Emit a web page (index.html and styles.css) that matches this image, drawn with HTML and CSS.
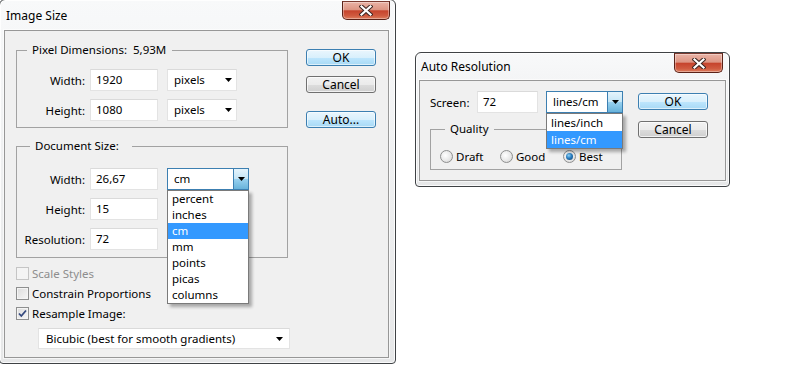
FILE: index.html
```html
<!DOCTYPE html>
<html>
<head>
<meta charset="utf-8">
<title>Image Size</title>
<link rel="stylesheet" href="styles.css">
</head>
<body>
<div class="stage">
  <div class="win win-main">
    <div class="titlebar">
      <span class="title">Image Size</span>
      <div class="close"><svg width="14" height="11" viewBox="0 0 14 11"><path d="M2.5 1.5 L11.5 9.5 M11.5 1.5 L2.5 9.5" stroke="#3b2420" stroke-width="4.2" stroke-linecap="square"/><path d="M2.5 1.5 L11.5 9.5 M11.5 1.5 L2.5 9.5" stroke="#ffffff" stroke-width="2.2" stroke-linecap="square"/></svg></div>
    </div>
    <div class="client client-main">
      <div class="main-col">
        <fieldset class="group group-pixel">
          <legend class="legend-pixel">Pixel Dimensions:&nbsp;&nbsp;5,93M</legend>
          <div class="group-body body-pixel">
            <div class="row">
              <span class="lbl">Width:</span>
              <div class="field">1920</div>
              <div class="combo combo-pixels"><span>pixels</span><svg class="tri" width="7" height="4" viewBox="0 0 7 4"><polygon points="0,0 7,0 3.5,4" fill="#000"/></svg></div>
            </div>
            <div class="row">
              <span class="lbl">Height:</span>
              <div class="field">1080</div>
              <div class="combo combo-pixels"><span>pixels</span><svg class="tri" width="7" height="4" viewBox="0 0 7 4"><polygon points="0,0 7,0 3.5,4" fill="#000"/></svg></div>
            </div>
          </div>
        </fieldset>
        <fieldset class="group group-doc">
          <legend class="legend-doc">Document Size:</legend>
          <div class="group-body body-doc">
            <div class="row">
              <span class="lbl">Width:</span>
              <div class="field">26,67</div>
              <div class="combo combo-open combo-cm"><span>cm</span><div class="drop-btn"><svg width="7" height="4" viewBox="0 0 7 4"><polygon points="0,0 7,0 3.5,4" fill="#000"/></svg></div>
                <ul class="list list-units">
                  <li>percent</li>
                  <li>inches</li>
                  <li class="sel">cm</li>
                  <li>mm</li>
                  <li>points</li>
                  <li>picas</li>
                  <li>columns</li>
                </ul>
              </div>
            </div>
            <div class="row">
              <span class="lbl">Height:</span>
              <div class="field">15</div>
            </div>
            <div class="row">
              <span class="lbl">Resolution:</span>
              <div class="field">72</div>
            </div>
          </div>
        </fieldset>
        <div class="checks">
          <div class="check disabled"><span class="box"></span><span>Scale Styles</span></div>
          <div class="check"><span class="box"></span><span>Constrain Proportions</span></div>
          <div class="check"><span class="box"><svg width="11" height="11" viewBox="0 0 11 11"><path d="M2 5.5 L4.3 8 L9 2.5" fill="none" stroke="#34497e" stroke-width="1.8"/></svg></span><span>Resample Image:</span></div>
        </div>
        <div class="combo combo-bicubic"><span>Bicubic (best for smooth gradients)</span><svg class="tri" width="7" height="4" viewBox="0 0 7 4"><polygon points="0,0 7,0 3.5,4" fill="#000"/></svg></div>
      </div>
      <div class="btn-col btn-col-main">
        <div class="btn btn-default">OK</div>
        <div class="btn btn-cancel">Cancel</div>
        <div class="btn btn-default btn-auto">Auto...</div>
      </div>
    </div>
  </div>

  <div class="win win-auto">
    <div class="titlebar titlebar-auto">
      <span class="title">Auto Resolution</span>
      <div class="close close-auto"><svg width="14" height="11" viewBox="0 0 14 11"><path d="M2.5 1.5 L11.5 9.5 M11.5 1.5 L2.5 9.5" stroke="#3b2420" stroke-width="4.2" stroke-linecap="square"/><path d="M2.5 1.5 L11.5 9.5 M11.5 1.5 L2.5 9.5" stroke="#ffffff" stroke-width="2.2" stroke-linecap="square"/></svg></div>
    </div>
    <div class="client client-auto">
      <div class="auto-col">
        <div class="row">
          <span class="lbl-screen">Screen:</span>
          <div class="field field-screen">72</div>
          <div class="combo combo-open combo-lines"><span>lines/cm</span><div class="drop-btn"><svg width="7" height="4" viewBox="0 0 7 4"><polygon points="0,0 7,0 3.5,4" fill="#000"/></svg></div>
            <ul class="list list-lines">
              <li>lines/inch</li>
              <li class="sel">lines/cm</li>
            </ul>
          </div>
        </div>
        <fieldset class="group group-quality">
          <legend class="legend-quality">Quality</legend>
          <div class="group-body body-quality">
            <div class="radio r-draft"><span class="dot"></span><span>Draft</span></div>
            <div class="radio r-good"><span class="dot"></span><span>Good</span></div>
            <div class="radio r-best"><span class="dot on"></span><span>Best</span></div>
          </div>
        </fieldset>
      </div>
      <div class="btn-col btn-col-auto">
        <div class="btn btn-default">OK</div>
        <div class="btn btn-cancel btn-cancel-auto">Cancel</div>
      </div>
    </div>
  </div>
</div>
</body>
</html>
```

FILE: styles.css
```css
* { box-sizing: border-box; }
html, body { margin: 0; padding: 0; background: #ffffff; }
body {
  width: 806px;
  height: 391px;
  overflow: hidden;
  font-family: "Noto Sans", "Open Sans", sans-serif;
  font-size: 11.5px;
  color: #000;
}
.stage { display: flex; align-items: flex-start; }

/* window frame */
.win {
  display: flex;
  flex-direction: column;
  border: 1px solid #3f4245;
  border-radius: 6px 6px 4px 4px;
  background: linear-gradient(180deg, #f8f9fa 0%, #f0f1f2 40%, #e6e7e8 100%);
  box-shadow: inset 0 0 0 1px rgba(255,255,255,0.8);
}
.win-main { width: 397px; height: 365px; margin: -1px 0 0 -1px; }
.win-auto { width: 315px; height: 135px; margin: 52px 0 0 19px; }

.titlebar {
  display: flex;
  justify-content: space-between;
  align-items: flex-start;
  height: 30px;
  padding: 0 5px 0 6px;
}
.titlebar-auto { height: 27px; padding: 0 6px 0 5px; }
.title { font-size: 12px; line-height: 16px; margin-top: 8px; color: #000; }
.titlebar-auto .title { margin-top: 6px; }

.close {
  width: 48px;
  height: 19px;
  margin-top: 1px;
  border: 1px solid #5a2218;
  border-top-color: #7a3a30;
  border-radius: 0 0 5px 5px;
  background: linear-gradient(180deg, #eab3a6 0%, #dd9583 45%, #c6442d 52%, #cf5a3f 80%, #dd7d5e 100%);
  box-shadow: inset 0 0 0 1px rgba(255,255,255,0.35);
  display: flex;
  align-items: center;
  justify-content: center;
}
.close-auto { width: 49px; height: 20px; margin-top: 0; }

/* client area */
.client {
  display: flex;
  background: #f0f0f0;
  border: 1px solid #979797;
  box-shadow: 0 0 0 1px rgba(255,255,255,0.6);
}
.client-main { margin: 0 6px 5px 4px; height: 328px; }
.client-auto { margin: 0 3px 5px 3px; height: 101px; }

.main-col { width: 283px; padding: 11px 0 0 11px; }

/* group boxes */
.group {
  margin: 0;
  padding: 0;
  border: 1px solid #a2a2a2;
  min-width: 0;
}
.group legend { line-height: 16px; height: 16px; padding: 0 5px; }
.legend-pixel { margin-left: 10px; padding-right: 6px !important; }
.legend-doc { margin-left: 13px; padding-right: 13px !important; }
.legend-quality { margin-left: 14px; }
.group-pixel { width: 272px; }
.group-doc { width: 272px; margin-top: 10px; }
.body-pixel { padding: 11px 0 6px 0; display: flex; flex-direction: column; gap: 8px; }
.body-doc { padding: 14px 0 7px 0; display: flex; flex-direction: column; gap: 8px; }

.row { display: flex; align-items: center; height: 22px; }
.lbl { width: 68px; text-align: right; }

.field {
  width: 68px;
  height: 22px;
  margin-left: 5px;
  background: #fff;
  border: 1px solid #e3e3e3;
  border-top-color: #dadada;
  padding-left: 5px;
  line-height: 20px;
}

.combo {
  position: relative;
  display: flex;
  align-items: center;
  height: 22px;
  background: #fff;
  border: 1px solid #e3e3e3;
  border-top-color: #dadada;
  padding-left: 6px;
}
.combo > span { flex: 1; line-height: 20px; white-space: nowrap; }
.combo .tri { margin-right: 4px; }
.combo-pixels { width: 70px; margin-left: 9px; }
.combo-cm { width: 82px; margin-left: 9px; }
.combo-open { border-color: #3c7fb1; padding-right: 0; }
.drop-btn {
  width: 15px;
  height: 20px;
  display: flex;
  align-items: center;
  justify-content: center;
  border-left: 1px solid #3c7fb1;
  background: linear-gradient(180deg, #e5f4fc 0%, #c4e5f6 50%, #98d1ef 51%, #68b3db 100%);
}

.list {
  position: absolute;
  left: -1px;
  top: 21px;
  margin: 0;
  padding: 0;
  list-style: none;
  background: #fff;
  border: 1px solid #7a7a7a;
  box-shadow: 3px 3px 3px rgba(0,0,0,0.3);
  z-index: 5;
}
.list li { height: 16px; line-height: 16px; padding-left: 4px; white-space: nowrap; }
.list li.sel { background: #3399ff; color: #fff; }
.list-units { width: 82px; }
.list-lines { width: 77px; }
.list-lines li { height: 17px; line-height: 17px; }

/* checkboxes */
.checks { margin-top: 5px; }
.check { display: flex; align-items: center; height: 20px; gap: 3px; }
.check .box {
  width: 13px;
  height: 13px;
  border: 1px solid #8e8f8f;
  background: linear-gradient(135deg, #dcdcdc 0%, #f6f6f6 100%);
  box-shadow: inset 0 0 0 1px #f4f4f4;
  display: flex;
  align-items: center;
  justify-content: center;
}
.check.disabled { color: #8d8d8d; }
.check.disabled .box { border-color: #c5c5c5; background: #f4f4f4; }

.combo-bicubic { width: 252px; height: 21px; margin: 5px 0 0 22px; padding-left: 7px; }
.combo-bicubic .tri { margin-right: 6px; }

/* buttons */
.btn-col { display: flex; flex-direction: column; width: 70px; }
.btn-col-main { margin-left: 18px; padding-top: 18px; }
.btn {
  width: 70px;
  height: 17px;
  border-radius: 3px;
  text-align: center;
  line-height: 15px;
  font-size: 12px;
}
.btn-default {
  border: 1px solid #3c7fb1;
  background: linear-gradient(180deg, #eaf6fd 0%, #d9f0fc 50%, #bee6fd 51%, #a7d9f5 100%);
  box-shadow: inset 0 0 0 1px rgba(255,255,255,0.6);
}
.btn-cancel {
  margin-top: 10px;
  border: 1px solid #707070;
  background: linear-gradient(180deg, #f2f2f2 0%, #ebebeb 50%, #dddddd 51%, #cfcfcf 100%);
  box-shadow: inset 0 0 0 1px rgba(255,255,255,0.7);
}
.btn-auto { margin-top: 18px; }

/* auto resolution */
.auto-col { width: 218px; padding: 10px 0 0 10px; }
.lbl-screen { width: 47px; }
.field-screen { width: 61px; margin-left: 0; }
.combo-lines { width: 77px; margin-left: 8px; }
.group-quality { width: 192px; margin-top: 8px; }
.body-quality { display: flex; align-items: center; height: 32px; padding: 11px 0 5px 9px; }
.radio { display: flex; align-items: center; gap: 3px; height: 16px; }
.r-draft { width: 60px; }
.r-good { width: 63px; }
.dot {
  width: 13px;
  height: 13px;
  border-radius: 50%;
  border: 1px solid #8e8f8f;
  background: radial-gradient(circle at 40% 40%, #ffffff 0%, #e6e6e6 60%, #cfcfcf 100%);
  position: relative;
}
.dot.on::after {
  content: "";
  position: absolute;
  left: 2px;
  top: 2px;
  width: 7px;
  height: 7px;
  border-radius: 50%;
  background: radial-gradient(circle at 40% 35%, #8fd2f7 0%, #2a7ec0 45%, #0d3d6a 100%);
}
.btn-col-auto { padding-top: 12px; }
.btn-cancel-auto { margin-top: 11px; }
```
